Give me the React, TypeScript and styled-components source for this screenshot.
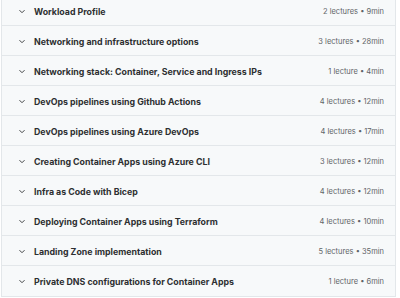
import React from 'react';
import styled, { createGlobalStyle } from 'styled-components';

interface Section {
  title: string;
  lectures: number;
  minutes: number;
}

const sections: Section[] = [
  { title: 'Workload Profile', lectures: 2, minutes: 9 },
  { title: 'Networking and infrastructure options', lectures: 3, minutes: 28 },
  { title: 'Networking stack: Container, Service and Ingress IPs', lectures: 1, minutes: 4 },
  { title: 'DevOps pipelines using Github Actions', lectures: 4, minutes: 12 },
  { title: 'DevOps pipelines using Azure DevOps', lectures: 4, minutes: 17 },
  { title: 'Creating Container Apps using Azure CLI', lectures: 3, minutes: 12 },
  { title: 'Infra as Code with Bicep', lectures: 4, minutes: 12 },
  { title: 'Deploying Container Apps using Terraform', lectures: 4, minutes: 10 },
  { title: 'Landing Zone implementation', lectures: 5, minutes: 35 },
  { title: 'Private DNS configurations for Container Apps', lectures: 1, minutes: 6 },
];

function Chevron() {
  return (
    <ChevronIcon viewBox="0 0 8 5" aria-hidden>
      <path d="M1.5 1.2l2.5 2.5 2.5-2.5" fill="none" stroke="currentColor" strokeWidth="1" />
    </ChevronIcon>
  );
}

function App() {
  return (
    <>
      <GlobalStyle />
      <Curriculum>
        {sections.map((s) => (
          <Row key={s.title}>
            <Chevron />
            <Title>{s.title}</Title>
            <Meta>
              {s.lectures} {s.lectures === 1 ? 'lecture' : 'lectures'} • {s.minutes}min
            </Meta>
          </Row>
        ))}
      </Curriculum>
    </>
  );
}

export default App;

const GlobalStyle = createGlobalStyle`
  body {
    margin: 0;
    background: #ffffff;
    font-family: Inter, "Noto Sans", sans-serif;
    overflow: hidden;
  }
`;

const Curriculum = styled.div`
  margin: -4px 4px 0 1px;
  border: 1px solid #e3e7ea;
  border-top: none;
`;

const Row = styled.div`
  display: flex;
  align-items: center;
  box-sizing: border-box;
  height: 30px;
  padding: 1px 11px 0 16px;
  background: #f7f9fa;
  border-bottom: 1px solid #e3e7ea;
  &:last-child {
    border-bottom: none;
  }
`;

const ChevronIcon = styled.svg`
  width: 8px;
  height: 5px;
  color: #3e4143;
  flex-shrink: 0;
  margin-right: 8px;
`;

const Title = styled.span`
  flex: 1;
  font-size: 8.8px;
  font-weight: 700;
  color: #2d2f31;
  white-space: nowrap;
`;

const Meta = styled.span`
  font-size: 7.5px;
  color: #5f6468;
  white-space: nowrap;
`;
